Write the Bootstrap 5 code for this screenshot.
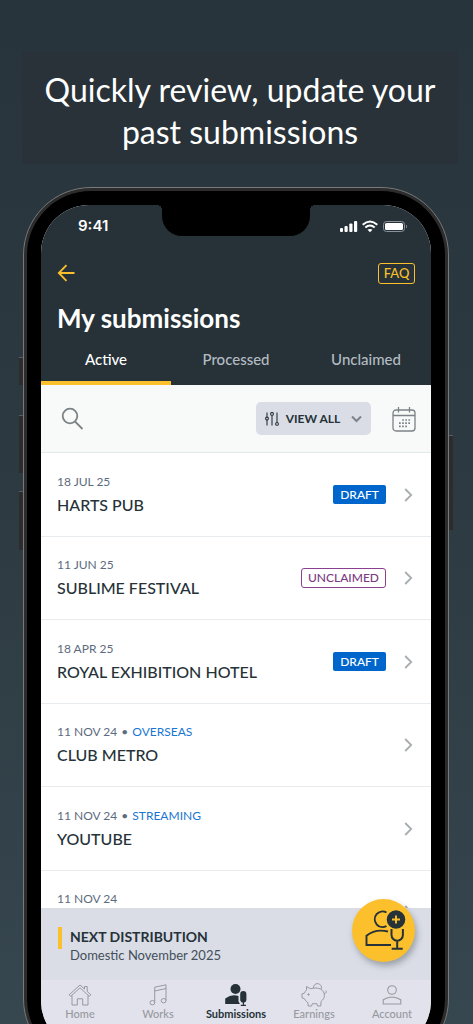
<!DOCTYPE html>
<html lang="en">
<head>
<meta charset="utf-8">
<meta name="viewport" content="width=device-width, initial-scale=1">
<title>My submissions</title>
<link href="https://cdn.jsdelivr.net/npm/bootstrap@5.3.0/dist/css/bootstrap.min.css" rel="stylesheet">
<style>
  :root { --ink: #263238; --gold: #fcc02c; --slate: #5d6b7e; --panel: #dadde6; }
  body { font-family: Lato, "Open Sans", sans-serif; color: var(--ink); background: linear-gradient(#28343b, #2d3a42 50%, #37474f); }
  .headline { margin: 52px 15px 0 22px; padding: 17px 0 11px; background: #283238; }
  .headline h1 { font-size: 32px; line-height: 42px; font-weight: 400; }
  .phone { margin: 23px 24px 0 23px; border-radius: 68px; border: 1px solid #77797a; background: #2c2c2c; padding: 3px; }
  .bezel { border-radius: 64px; background: #000; padding: 14px; }
  .screen { border-radius: 48px; aspect-ratio: 390 / 844; background: #fff; overflow: hidden; }
  .screen > * { flex-shrink: 0; }
  .side-key { position: absolute; width: 4px; background: #2c2c2c; border-top: 1px solid #5a5d5f; }
  .key-mute { left: -5px; top: 169px; height: 28px; }
  .key-up { left: -5px; top: 227px; height: 58px; }
  .key-down { left: -5px; top: 303px; height: 59px; }
  .key-power { right: -5px; top: 247px; height: 95px; }
  .top-area { background: var(--ink); }
  .status { height: 46px; display: grid; grid-template-columns: 1fr 148px 1fr; }
  .status .clock { font: 600 15px/18px Inter, sans-serif; padding: 12px 0 0 37px; }
  .notch { position: relative; height: 31px; border-radius: 0 0 20px 20px; background: #000; }
  .notch::before, .notch::after { content: ""; position: absolute; top: 0; width: 5px; height: 5px; }
  .notch::before { right: 100%; background: radial-gradient(circle at 0 100%, transparent 5px, #000 5px); }
  .notch::after { left: 100%; background: radial-gradient(circle at 100% 100%, transparent 5px, #000 5px); }
  .status .signals { padding: 15px 0 0 29px; }
  .bar-row { height: 44px; padding: 0 16px; }
  .faq { width: 37px; height: 21px; border: 1px solid var(--gold); border-radius: 3px; color: var(--gold); font-size: 13px; line-height: 19px; font-weight: 500; }
  .screen-title { font-size: 26px; line-height: 32px; font-weight: 700; padding: 7px 16px 1px; }
  .tabs { height: 50px; }
  .tabs a { font-size: 15px; line-height: 20px; padding-top: 14px; color: #b4bbc2; font-weight: 500; border-bottom: 4px solid transparent; }
  .tabs a.active { color: #fff; border-color: var(--gold); }
  .tools { height: 68px; padding: 0 15px 0 20px; background: #f8faf9; border-bottom: 1px solid #e3e8ea; }
  .filter { width: 115px; height: 33px; border-radius: 5px; background: var(--panel); font-size: 12px; font-weight: 700; color: var(--ink); padding: 0 9px; }
  .gap-tools { gap: 21px; }
  .entries { flex: 1 1 0; min-height: 0; }
  .entry { height: 84px; padding: 0 18px 0 16px; border-bottom: 1px solid #e8ecee; color: var(--ink); }
  .entry:nth-child(even) { height: 83px; }
  .entry-meta { font-size: 12px; line-height: 20px; color: var(--slate); }
  .entry-meta b { font-weight: 400; color: #1976d2; }
  .dot { margin: 0 1px; }
  .entry-name { font-size: 16px; line-height: 26px; font-weight: 500; }
  .tag { font-size: 12px; line-height: 19px; padding: 0 7px; border-radius: 2px; background: #0066cc; color: #fff; font-weight: 500; }
  .tag-line { border: 1px solid #8a3f8f; background: #fff; color: #7b3a83; padding: 0 6px; line-height: 18px; border-radius: 3px; }
  .gap-entry { gap: 18px; }
  .next { height: 72px; padding: 19px 17px 0; background: var(--panel); }
  .next .mark-bar { width: 4px; height: 22px; background: var(--gold); }
  .next strong { font-size: 14px; line-height: 20px; font-weight: 700; }
  .next span { font-size: 13px; line-height: 16px; color: #434f5a; }
  .fab { position: absolute; right: 16px; top: -9px; width: 63px; height: 63px; border-radius: 50%; background: var(--gold); box-shadow: 2px 4px 6px rgba(38,50,56,.35); }
  .dock { height: 69px; background: #e1e2ec; padding-top: 3px; }
  .dock a { color: #97999e; font-size: 11px; line-height: 14px; font-weight: 500; }
  .dock a.active { color: var(--ink); font-weight: 700; }
  svg { display: block; flex: none; }
</style>
</head>
<body class="vh-100 overflow-hidden">
<div class="d-flex flex-column">
  <header class="headline text-center text-white">
    <h1 class="m-0">Quickly review, update your<br>past submissions</h1>
  </header>

  <div class="phone position-relative">
    <i class="side-key key-mute"></i><i class="side-key key-up"></i><i class="side-key key-down"></i><i class="side-key key-power"></i>
    <div class="bezel">
      <main class="screen d-flex flex-column">
        <div class="top-area text-white">
          <div class="status">
            <div class="clock">9:41</div>
            <div class="notch"></div>
            <div class="signals">
              <svg width="70" height="14" viewBox="0 0 70 14" fill="#fff">
                <rect x="1" y="8" width="3" height="4" rx="1"/><rect x="5.500" y="6" width="3.200" height="6" rx="1"/><rect x="10.300" y="3.500" width="3.200" height="8.500" rx="1"/><rect x="15" y="1" width="3.200" height="11" rx="1"/>
                <g fill="none" stroke="#fff" stroke-width="2"><path d="M23.700 4.800Q31-1.800 38.300 4.800M26.300 7.600Q31 3.400 35.700 7.600"/></g>
                <path d="M28.500 9.800Q31 8 33.500 9.800L31 12.200Z"/>
                <rect x="44.500" y="1.500" width="21" height="10" rx="3" fill="none" stroke="#89929a"/><rect x="46" y="3" width="18" height="7" rx="1.500"/><path d="M67 4.500q2 2 0 4Z" fill="#89929a"/>
              </svg>
            </div>
          </div>
          <div class="bar-row d-flex justify-content-between align-items-center">
            <a href="#" aria-label="Back"><svg width="18" height="18" viewBox="0 0 18 18" fill="none" stroke="#fcc02c" stroke-width="1.800"><path d="M17.500 9H2M9.500 1.200L1.800 9l7.700 7.800"/></svg></a>
            <a href="#" class="faq text-center text-decoration-none">FAQ</a>
          </div>
          <h2 class="screen-title m-0">My submissions</h2>
          <nav class="tabs row g-0 text-center">
            <a href="#" class="col active text-decoration-none">Active</a>
            <a href="#" class="col text-decoration-none">Processed</a>
            <a href="#" class="col text-decoration-none">Unclaimed</a>
          </nav>
        </div>

        <div class="tools d-flex justify-content-between align-items-center">
          <button type="button" class="btn p-0 border-0" aria-label="Search"><svg width="24" height="24" viewBox="0 0 24 24" fill="none" stroke="#7b8386" stroke-width="1.800"><circle cx="9" cy="9" r="7.300"/><path d="M14 14.500l7.500 7.500"/></svg></button>
          <div class="d-flex align-items-center gap-tools">
            <button type="button" class="filter btn border-0 d-flex align-items-center justify-content-between">
              <svg width="14" height="14" viewBox="0 0 14 14" fill="none" stroke="#263238" stroke-width="1.100"><path d="M2 .5v4.500M2 8v5.500M7 3.200v10.300M12 .5v10"/><circle cx="2" cy="6.500" r="1.400"/><circle cx="7" cy="1.900" r="1.400"/><circle cx="12" cy="11.900" r="1.400"/></svg>
              VIEW ALL
              <svg class="ms-1" width="11" height="8" viewBox="0 0 11 8" fill="none" stroke="#7d8489" stroke-width="2"><path d="M1 1.500l4.500 4.500L10 1.500"/></svg>
            </button>
            <button type="button" class="btn p-0 border-0" aria-label="Calendar"><svg width="24" height="26" viewBox="0 0 24 26" fill="none" stroke="#7b8386" stroke-width="1.300"><rect x="1" y="4" width="22" height="21" rx="3"/><path d="M1 9.500h22M6.500 1v5.500M17.500 1v5.500"/><path d="M10.200 14h9M7 17.200h12.200M7 20.400h9" stroke-width="1.700" stroke-dasharray="1.700 1.400"/></svg></button>
          </div>
        </div>

        <div class="entries overflow-hidden">
          <a href="#" class="entry d-flex align-items-center gap-entry text-decoration-none"><div class="me-auto"><div class="entry-meta">18 JUL 25</div><div class="entry-name">HARTS PUB</div></div><span class="tag">DRAFT</span><svg width="9" height="14" viewBox="0 0 9 14" fill="none" stroke="#a9adb0" stroke-width="1.800"><path d="M1.200 1l6 6-6 6"/></svg></a>
          <a href="#" class="entry d-flex align-items-center gap-entry text-decoration-none"><div class="me-auto"><div class="entry-meta">11 JUN 25</div><div class="entry-name">SUBLIME FESTIVAL</div></div><span class="tag tag-line">UNCLAIMED</span><svg width="9" height="14" viewBox="0 0 9 14" fill="none" stroke="#a9adb0" stroke-width="1.800"><path d="M1.200 1l6 6-6 6"/></svg></a>
          <a href="#" class="entry d-flex align-items-center gap-entry text-decoration-none"><div class="me-auto"><div class="entry-meta">18 APR 25</div><div class="entry-name">ROYAL EXHIBITION HOTEL</div></div><span class="tag">DRAFT</span><svg width="9" height="14" viewBox="0 0 9 14" fill="none" stroke="#a9adb0" stroke-width="1.800"><path d="M1.200 1l6 6-6 6"/></svg></a>
          <a href="#" class="entry d-flex align-items-center gap-entry text-decoration-none"><div class="me-auto"><div class="entry-meta">11 NOV 24 <span class="dot">•</span> <b>OVERSEAS</b></div><div class="entry-name">CLUB METRO</div></div><svg width="9" height="14" viewBox="0 0 9 14" fill="none" stroke="#a9adb0" stroke-width="1.800"><path d="M1.200 1l6 6-6 6"/></svg></a>
          <a href="#" class="entry d-flex align-items-center gap-entry text-decoration-none"><div class="me-auto"><div class="entry-meta">11 NOV 24 <span class="dot">•</span> <b>STREAMING</b></div><div class="entry-name">YOUTUBE</div></div><svg width="9" height="14" viewBox="0 0 9 14" fill="none" stroke="#a9adb0" stroke-width="1.800"><path d="M1.200 1l6 6-6 6"/></svg></a>
          <a href="#" class="entry d-flex align-items-center gap-entry text-decoration-none"><div class="me-auto"><div class="entry-meta">11 NOV 24</div><div class="entry-name">&nbsp;</div></div><svg width="9" height="14" viewBox="0 0 9 14" fill="none" stroke="#a9adb0" stroke-width="1.800"><path d="M1.200 1l6 6-6 6"/></svg></a>
        </div>

        <div class="next position-relative d-flex align-items-start">
          <div class="mark-bar me-2"></div>
          <div class="d-flex flex-column"><strong>NEXT DISTRIBUTION</strong><span>Domestic November 2025</span></div>
          <button type="button" class="fab btn p-0 border-0" aria-label="New submission">
            <svg width="63" height="63" viewBox="0 0 63 63" fill="none" stroke="#263238" stroke-width="1.900"><path d="M34.500 13.500a7.800 7.800 0 1 0 0 13.500M36 32.500c-7-1.700-15.500-.6-21.500 4.300v9.200h24.500"/><path d="M39.500 30v6a5.700 5.700 0 0 0 11.400 0V30M45.200 41.500v8M39.700 49.700h11" stroke-width="2"/><circle cx="44" cy="20.500" r="9.300" fill="#263238" stroke="none"/><path d="M40 20.500h8M44 16.500v8" stroke="#fcc02c"/></svg>
          </button>
        </div>

        <nav class="dock row g-0 text-center">
          <a href="#" class="col text-decoration-none"><svg class="mx-auto" width="24" height="24" viewBox="0 0 24 24" fill="none" stroke="#97999e" stroke-width="1"><path d="M1.200 11.800L12 2l4.500 4V3.500h2.700v5l3.600 3.300-1.500 1.600L12 4.800 2.700 13.400ZM4 12.500V22h5.300v-6.200h5.400V22H20v-9.500"/></svg>Home</a>
          <a href="#" class="col text-decoration-none"><svg class="mx-auto" width="24" height="24" viewBox="0 0 24 24" fill="none" stroke="#97999e" stroke-width="1"><path d="M8.700 19.500V4.200L20 1.800v15.700M8.700 8L20 5.500"/><ellipse cx="6.400" cy="19.700" rx="2.400" ry="2.200"/><ellipse cx="17.600" cy="17.700" rx="2.400" ry="2.200"/></svg>Works</a>
          <a href="#" class="col active text-decoration-none"><svg class="mx-auto" width="24" height="24" viewBox="0 0 24 24" fill="#263238"><circle cx="11.500" cy="6" r="5"/><path d="M1.200 21v-5.500Q8 10.500 14.500 13v5.500l1.500 2.500Z"/><rect x="16.200" y="8" width="6.200" height="11.500" rx="3.100"/><path d="M18.800 19h1.200v2.800h2v1.200h-5.200v-1.200h2Z"/></svg>Submissions</a>
          <a href="#" class="col text-decoration-none"><svg class="mx-auto" width="26" height="24" viewBox="0 0 26 24" fill="none" stroke="#97999e" stroke-width="1"><path d="M5.500 3.500l4.200 2.300c3-1.200 7.500-1 10 .3 2.600 1.500 3.800 4 3.700 6.400-.1 2.500-1.400 4.400-3.200 5.700l-.5 4.800h-3.200l-.6-2.300h-4.500L10.500 23H7.300l-.6-3.700c-1.600-.9-2.500-2-3.200-3.600L1 14.800v-4l2.300-.5c.5-1.500 1.300-2.500 2.300-3.400ZM12.500 5.200a4 4 0 1 1 7.700.8M23.200 10.500c2.300 0 2.500-2 1.600-3"/><circle cx="7.500" cy="11.500" r=".7" fill="#97999e"/></svg>Earnings</a>
          <a href="#" class="col text-decoration-none"><svg class="mx-auto" width="24" height="24" viewBox="0 0 24 24" fill="none" stroke="#97999e" stroke-width="1.100"><circle cx="12" cy="7" r="4.300"/><path d="M3.200 21v-4.200q8.800-5.600 17.600 0V21Z"/></svg>Account</a>
        </nav>
      </main>
    </div>
  </div>
</div>
<script src="https://cdn.jsdelivr.net/npm/bootstrap@5.3.0/dist/js/bootstrap.bundle.min.js"></script>
</body>
</html>
